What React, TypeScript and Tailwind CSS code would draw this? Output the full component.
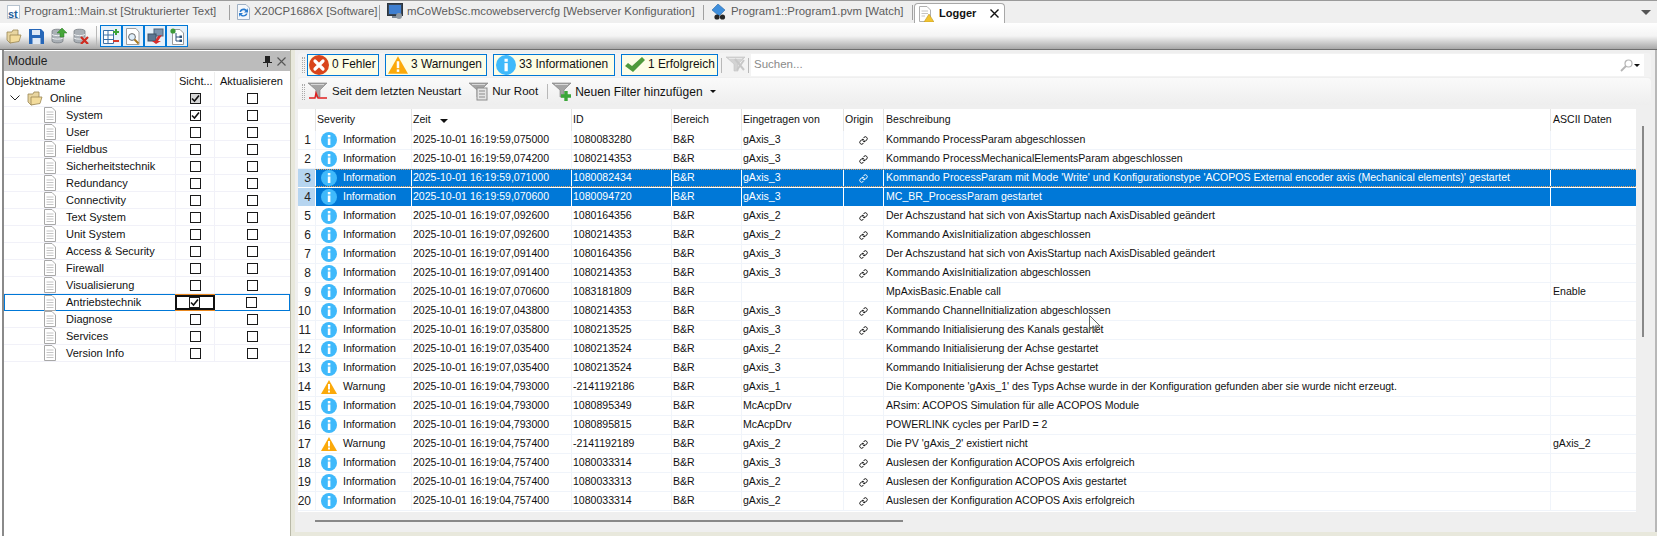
import { Link } from "lucide-react";

type Entry = {
  sev: "i" | "w";
  time: string;
  id: string;
  by: string;
  link: boolean;
  text: string;
  ascii?: string;
};

const ENTRIES: Entry[] = [
  { sev: "i", time: "2025-10-01 16:19:59,075000", id: "1080083280", by: "gAxis_3", link: true, text: "Kommando ProcessParam abgeschlossen" },
  { sev: "i", time: "2025-10-01 16:19:59,074200", id: "1080214353", by: "gAxis_3", link: true, text: "Kommando ProcessMechanicalElementsParam abgeschlossen" },
  { sev: "i", time: "2025-10-01 16:19:59,071000", id: "1080082434", by: "gAxis_3", link: true, text: "Kommando ProcessParam mit Mode 'Write' und Konfigurationstype 'ACOPOS External encoder axis (Mechanical elements)' gestartet" },
  { sev: "i", time: "2025-10-01 16:19:59,070600", id: "1080094720", by: "gAxis_3", link: false, text: "MC_BR_ProcessParam gestartet" },
  { sev: "i", time: "2025-10-01 16:19:07,092600", id: "1080164356", by: "gAxis_2", link: true, text: "Der Achszustand hat sich von AxisStartup nach AxisDisabled geändert" },
  { sev: "i", time: "2025-10-01 16:19:07,092600", id: "1080214353", by: "gAxis_2", link: true, text: "Kommando AxisInitialization abgeschlossen" },
  { sev: "i", time: "2025-10-01 16:19:07,091400", id: "1080164356", by: "gAxis_3", link: true, text: "Der Achszustand hat sich von AxisStartup nach AxisDisabled geändert" },
  { sev: "i", time: "2025-10-01 16:19:07,091400", id: "1080214353", by: "gAxis_3", link: true, text: "Kommando AxisInitialization abgeschlossen" },
  { sev: "i", time: "2025-10-01 16:19:07,070600", id: "1083181809", by: "", link: false, text: "MpAxisBasic.Enable call", ascii: "Enable" },
  { sev: "i", time: "2025-10-01 16:19:07,043800", id: "1080214353", by: "gAxis_3", link: true, text: "Kommando ChannelInitialization abgeschlossen" },
  { sev: "i", time: "2025-10-01 16:19:07,035800", id: "1080213525", by: "gAxis_3", link: true, text: "Kommando Initialisierung des Kanals gestartet" },
  { sev: "i", time: "2025-10-01 16:19:07,035400", id: "1080213524", by: "gAxis_2", link: false, text: "Kommando Initialisierung der Achse gestartet" },
  { sev: "i", time: "2025-10-01 16:19:07,035400", id: "1080213524", by: "gAxis_3", link: false, text: "Kommando Initialisierung der Achse gestartet" },
  { sev: "w", time: "2025-10-01 16:19:04,793000", id: "-2141192186", by: "gAxis_1", link: false, text: "Die Komponente 'gAxis_1' des Typs Achse wurde in der Konfiguration gefunden aber sie wurde nicht erzeugt." },
  { sev: "i", time: "2025-10-01 16:19:04,793000", id: "1080895349", by: "McAcpDrv", link: false, text: "ARsim: ACOPOS Simulation für alle ACOPOS Module" },
  { sev: "i", time: "2025-10-01 16:19:04,793000", id: "1080895815", by: "McAcpDrv", link: false, text: "POWERLINK cycles per ParID = 2" },
  { sev: "w", time: "2025-10-01 16:19:04,757400", id: "-2141192189", by: "gAxis_2", link: true, text: "Die PV 'gAxis_2' existiert nicht", ascii: "gAxis_2" },
  { sev: "i", time: "2025-10-01 16:19:04,757400", id: "1080033314", by: "gAxis_3", link: true, text: "Auslesen der Konfiguration ACOPOS Axis erfolgreich" },
  { sev: "i", time: "2025-10-01 16:19:04,757400", id: "1080033313", by: "gAxis_2", link: true, text: "Auslesen der Konfiguration ACOPOS Axis gestartet" },
  { sev: "i", time: "2025-10-01 16:19:04,757400", id: "1080033314", by: "gAxis_2", link: true, text: "Auslesen der Konfiguration ACOPOS Axis erfolgreich" },
];

const MODULES = [
  { name: "System", on: true },
  { name: "User" },
  { name: "Fieldbus" },
  { name: "Sicherheitstechnik" },
  { name: "Redundancy" },
  { name: "Connectivity" },
  { name: "Text System" },
  { name: "Unit System" },
  { name: "Access & Security" },
  { name: "Firewall" },
  { name: "Visualisierung" },
  { name: "Antriebstechnik", on: true, selected: true },
  { name: "Diagnose" },
  { name: "Services" },
  { name: "Version Info" },
];

function InfoIcon({ size = 16 }: { size?: number }) {
  return (
    <svg width={size} height={size} viewBox="0 0 16 16" className="shrink-0">
      <circle cx="8" cy="8" r="8" fill="#3fb9fb" />
      <rect x="6.8" y="3" width="2.6" height="2.4" fill="#fff" />
      <rect x="6.8" y="6.5" width="2.6" height="6.5" fill="#fff" />
    </svg>
  );
}

function WarnIcon({ size = 16 }: { size?: number }) {
  return (
    <svg width={size} height={size} viewBox="0 0 16 16" className="shrink-0">
      <path d="M8 1 L16 15 H0 Z" fill="#fba90a" />
      <rect x="7" y="5" width="2" height="5.5" fill="#fff" />
      <rect x="7" y="11.5" width="2" height="2" fill="#fff" />
    </svg>
  );
}

function ErrorIcon() {
  return (
    <svg width="20" height="20" viewBox="0 0 20 20" className="shrink-0">
      <circle cx="10" cy="10" r="10" fill="#d9451c" />
      <path d="M6 6 L14 14 M14 6 L6 14" stroke="#fff" strokeWidth="3.2" strokeLinecap="round" />
    </svg>
  );
}

function CheckIcon() {
  return (
    <svg width="20" height="16" viewBox="0 0 20 16" className="shrink-0">
      <path d="M0 9 L3 6 L7 9 L17 0 L20 3 L8 15 Z" fill="#4f9a3c" />
    </svg>
  );
}

function DocIcon() {
  return (
    <svg width="12" height="16" viewBox="0 0 12 16" className="shrink-0">
      <path d="M.5.5 H8 L11.5 4 V15.5 H.5 Z" fill="#fff" stroke="#a8a8a8" />
      <path d="M2.5 5 H9.5 M2.5 7.5 H9.5 M2.5 10 H9.5 M2.5 12.5 H9.5" stroke="#c4c4c4" />
    </svg>
  );
}

function FolderIcon() {
  return (
    <svg width="16" height="16" viewBox="0 0 16 16" className="shrink-0">
      <path d="M1 4 H6 L7 2 H12 V12 L4 15 L1 12 Z" fill="#e8d5a0" stroke="#9a8654" strokeWidth=".8" />
      <path d="M4 7 H15 L13 13.5 L4 15 Z" fill="#f3dc9c" stroke="#9a8654" strokeWidth=".8" />
    </svg>
  );
}

function DbIcon({ children }: { children?: React.ReactNode }) {
  return (
    <svg width="16" height="16" viewBox="0 0 16 16" className="shrink-0">
      <path d="M1 3 C1 .6 12 .6 12 3 V13 C12 15.5 1 15.5 1 13 Z" fill="#aab0b6" stroke="#6d7278" strokeWidth=".7" />
      <path d="M1 6.5 C3 8 10 8 12 6.5 M1 10 C3 11.5 10 11.5 12 10" stroke="#eef0f2" fill="none" />
      {children}
    </svg>
  );
}

function TabIcon({ kind }: { kind: string }) {
  if (kind === "st") {
    return (
      <span className="relative h-[14px] w-[13px] shrink-0 border border-[#b7c3cf] bg-white">
        <span className="absolute -bottom-[2px] left-0 font-['Liberation_Sans',sans-serif] text-[11px] leading-[12px] font-bold text-[#1d5e9a]">st</span>
      </span>
    );
  }
  if (kind === "sw") {
    return (
      <svg width="13" height="16" viewBox="0 0 13 16" className="shrink-0">
        <path d="M.5.5 H9 L12.5 4 V15.5 H.5 Z" fill="#f4f7fb" stroke="#9fb0c4" />
        <path d="M2.5 8 C3 4 8 3.5 10 6 L11 4 V8.5 H7 L8.5 7 C7 5.5 5 6 4 8 Z M10.5 9.5 C10 13 5 13.5 3 11 L2 13 V9 H6 L4.5 10.5 C6 11.5 8 11.5 9 9.5 Z" fill="#2a7cd0" />
      </svg>
    );
  }
  if (kind === "web") {
    return (
      <svg width="16" height="17" viewBox="0 0 16 17" className="shrink-0">
        <rect x=".5" y=".5" width="15" height="12" fill="#3a4756" stroke="#2d3640" />
        <rect x="2" y="2" width="12" height="9" fill="#3f7fd0" />
        <rect x="5" y="13" width="6" height="2" fill="#7b8794" />
        <circle cx="12" cy="13" r="3" fill="#8f99a3" />
      </svg>
    );
  }
  if (kind === "watch") {
    return (
      <svg width="16" height="16" viewBox="0 0 16 16" className="shrink-0">
        <path d="M1 6 L7 0 L14 6 L8 12 Z" fill="#3f8fdc" stroke="#2a6aa8" strokeWidth=".6" />
        <circle cx="6" cy="13" r="2.6" fill="#262626" />
        <circle cx="11.5" cy="13" r="2.6" fill="#262626" />
      </svg>
    );
  }
  return (
    <svg width="15" height="16" viewBox="0 0 15 16" className="shrink-0">
      <path d="M.5.5 H8 L11.5 4 V15.5 H.5 Z" fill="#fff" stroke="#b0b0b0" />
      <path d="M2.5 5 H9 M2.5 7.5 H9 M2.5 10 H6" stroke="#c4c4c4" />
      <path d="M10 8 L15 16 H5 Z" fill="#f2c430" stroke="#b08c20" strokeWidth=".5" />
    </svg>
  );
}

function Tab({ kind, label, width }: { kind: string; label: string; width: string }) {
  return (
    <div className={`flex h-full items-center ${width}`}>
      <div className="flex flex-1 items-center gap-[4px] whitespace-nowrap pl-[7px] text-[#5c5c5c]">
        <TabIcon kind={kind} />
        <span>{label}</span>
      </div>
      <span className="h-[15px] w-px shrink-0 bg-[#a0a0a0]" />
    </div>
  );
}

function ToolButton({ children }: { children: React.ReactNode }) {
  return (
    <div className="flex h-[22px] w-[22px] items-center justify-center border border-[#0078d7] bg-[#e6f1fa]">
      {children}
    </div>
  );
}

function Toolbar() {
  return (
    <div className="flex h-[27px] items-center border-b border-[#6e6e6e] bg-gradient-to-b from-white via-[#f4f4f4] to-[#a8a8a8] pl-[6px]">
      <FolderIcon />
      <div className="ml-[7px] text-[#1c5fb0]">
        <svg width="15" height="15" viewBox="0 0 15 15" className="block">
          <path d="M0 0 H12 L15 3 V15 H0 Z" fill="#2767b8" />
          <rect x="3" y="1" width="8" height="5" fill="#dfe9f5" />
          <rect x="3.5" y="9" width="8" height="6" fill="#dfe9f5" />
        </svg>
      </div>
      <div className="ml-[7px]">
        <DbIcon>
          <path d="M11 0 L16 5 H13 V9 H9 V5 H6 Z" fill="#46a63a" stroke="#2f7a28" strokeWidth=".5" />
        </DbIcon>
      </div>
      <div className="ml-[6px]">
        <DbIcon>
          <path d="M8 9 L15 16 M15 9 L8 16" stroke="#cf2b20" strokeWidth="2.2" />
        </DbIcon>
      </div>
      <span className="ml-[7px] h-[20px] w-px bg-[#b8b8b8]" />
      <div className="ml-[3px] flex">
        <ToolButton>
          <svg width="17" height="17" viewBox="0 0 17 17">
            <path d="M.5 2.5 H10.5 V15.5 H.5 Z M.5 7 H10.5 M.5 11.5 H10.5 M5 2.5 V15.5" fill="#fff" stroke="#3a6ea5" />
            <path d="M10 4 H16 M13 1 V7" stroke="#3aa436" strokeWidth="2" />
            <path d="M10 13 H16" stroke="#d8382a" strokeWidth="2" />
          </svg>
        </ToolButton>
        <ToolButton>
          <svg width="16" height="17" viewBox="0 0 16 17">
            <path d="M1.5.5 H11 L14 4 V16.5 H1.5 Z" fill="#fff" stroke="#a0a0a0" />
            <circle cx="7" cy="9" r="3.4" fill="#dfeefa" stroke="#6a6a6a" />
            <path d="M9.5 11.5 L13.5 15.5" stroke="#a8781e" strokeWidth="2" />
          </svg>
        </ToolButton>
        <ToolButton>
          <svg width="17" height="16" viewBox="0 0 17 16">
            <rect x="7" y="1" width="9" height="7" fill="#7d94ad" stroke="#4f647a" />
            <rect x="1" y="6" width="8" height="7" fill="#5c7691" stroke="#3e5266" />
            <path d="M15 7 L11 13 H14 L9 16 L5 13 H8 L11 8 Z" fill="#d92b2b" />
          </svg>
        </ToolButton>
        <ToolButton>
          <svg width="15" height="17" viewBox="0 0 15 17">
            <path d="M2.5 1.5 H10 L13.5 5 V16.5 H2.5 Z" fill="#fff" stroke="#9a9a9a" />
            <circle cx="3" cy="3" r="2.6" fill="#3d9a38" />
            <path d="M6 5 V13 H10 M6 9 H10" stroke="#2b4f78" fill="none" />
            <rect x="9.5" y="7.5" width="2.5" height="2.5" fill="#2b4f78" />
            <rect x="9.5" y="11.5" width="2.5" height="2.5" fill="#2b4f78" />
          </svg>
        </ToolButton>
      </div>
    </div>
  );
}

function Check({ on, dark }: { on?: boolean; dark?: boolean }) {
  return (
    <span className={`flex h-[11px] w-[11px] items-center justify-center border border-[#1a1a1a] ${dark ? "bg-[#d8d8d8]" : "bg-white"}`}>
      {on && (
        <svg width="9" height="9" viewBox="0 0 9 9">
          <path d="M1 4.5 L3.5 7 L8 1.5" fill="none" stroke="#111" strokeWidth="1.6" />
        </svg>
      )}
    </span>
  );
}

function ModuleRow({ name, on, selected }: { name: string; on?: boolean; selected?: boolean }) {
  return (
    <div className={`flex h-[17px] items-center border-b ${selected ? "border border-[#0078d7]" : "border-[#f1f1f8]"}`}>
      <div className={`flex w-[171px] items-center gap-[10px] ${selected ? "pl-[39px]" : "pl-[40px]"}`}>
        <DocIcon />
        <span>{name}</span>
      </div>
      <div className={`flex h-full w-[40px] items-center justify-center ${selected ? "border-2 border-[#111] shadow-[0_-1px_0_#e8871e,0_1px_0_#e8871e]" : "border-x border-[#f1f1f8]"}`}>
        <Check on={on} />
      </div>
      <div className="flex w-[75px] items-center justify-center">
        <Check />
      </div>
    </div>
  );
}

function ModulePanel() {
  return (
    <aside className="ml-[2px] flex w-[288px] flex-col border-l-2 border-[#8a8a8a] bg-white text-[11px] text-[#111]">
      <div className="mt-px flex h-[20px] items-center justify-between bg-[#bcbcbc] pl-[4px] pr-[4px] text-[12px] text-[#222]">
        <span>Module</span>
        <span className="flex items-center gap-[5px]">
          <svg width="9" height="11" viewBox="0 0 9 11">
            <path d="M2 0 H7 V6 H9 V7 H5 V11 H4 V7 H0 V6 H2 Z" fill="#222" />
          </svg>
          <svg width="9" height="9" viewBox="0 0 9 9">
            <path d="M.5.5 L8.5 8.5 M8.5.5 L.5 8.5" stroke="#555" strokeWidth="1.1" />
          </svg>
        </span>
      </div>
      <div className="flex h-[19px] items-center pt-[1px]">
        <div className="w-[171px] pl-[2px]">Objektname</div>
        <div className="flex h-full w-[40px] items-center border-x border-[#eeeeee] pl-[3px]">Sicht...</div>
        <div className="pl-[5px]">Aktualisieren</div>
      </div>
      <div className="flex h-[17px] items-center border-b border-[#f1f1f8]">
        <div className="flex w-[171px] items-center pl-[6px]">
          <svg width="10" height="6" viewBox="0 0 10 6">
            <path d="M.5.5 L5 5 L9.5.5" fill="none" stroke="#222" />
          </svg>
          <span className="ml-[7px]"><FolderIcon /></span>
          <span className="ml-[7px]">Online</span>
        </div>
        <div className="flex h-full w-[40px] items-center justify-center border-x border-[#f1f1f8]">
          <Check on dark />
        </div>
        <div className="flex w-[75px] items-center justify-center">
          <Check />
        </div>
      </div>
      {MODULES.map((m) => (
        <ModuleRow key={m.name} name={m.name} on={m.on} selected={m.selected} />
      ))}
    </aside>
  );
}

function Counter({ icon, label, width }: { icon: React.ReactNode; label: string; width: string }) {
  return (
    <div className={`flex h-[22px] items-center gap-[3px] whitespace-nowrap border border-[#0078d7] bg-[#fdfde6] pl-[1px] text-[11.9px] ${width}`}>
      {icon}
      <span>{label}</span>
    </div>
  );
}

function Grip() {
  return <span className="h-[16px] w-[3px] border-x border-dotted border-[#aaa]" />;
}

function Funnel({ children }: { children?: React.ReactNode }) {
  return (
    <svg width="20" height="19" viewBox="0 0 20 19" className="shrink-0">
      <path d="M0 1 H19 L12 8 V15 H8 V8 Z" fill="#a4a4a4" stroke="#7c7c7c" strokeWidth=".6" />
      <path d="M3 2.5 H16" stroke="#d8d8d8" />
      {children}
    </svg>
  );
}

function FilterBars() {
  return (
    <div className="text-[11.5px] text-[#111]">
      <div className="flex h-[24px] items-center rounded-t-sm bg-[#f3f3f3] pl-[4px]">
        <Grip />
        <div className="ml-[2px] flex items-center gap-[6px]">
          <Counter icon={<ErrorIcon />} label="0 Fehler" width="w-[72px]" />
          <Counter icon={<span className="ml-[1px]"><WarnIcon size={20} /></span>} label="3 Warnungen" width="w-[102px]" />
          <Counter icon={<span className="ml-[1px]"><InfoIcon size={20} /></span>} label="33 Informationen" width="w-[122px]" />
          <Counter icon={<span className="ml-[2px]"><CheckIcon /></span>} label="1 Erfolgreich" width="w-[97px]" />
        </div>
        <span className="ml-[3px] h-[15px] w-px bg-[#b8b8b8]" />
        <span className="ml-[4px] opacity-40">
          <Funnel>
            <path d="M9 3 L18 14 M18 4 L11 14" stroke="#888" strokeWidth="2" />
          </Funnel>
        </span>
        <span className="ml-[2px] h-[15px] w-px bg-[#b8b8b8]" />
        <div className="ml-[2px] flex h-[22px] w-[893px] items-center justify-between bg-white pl-[3px] text-[#8a8a8a]">
          <span>Suchen...</span>
          <span className="flex items-center pr-[4px]">
            <svg width="13" height="13" viewBox="0 0 13 13">
              <circle cx="8.5" cy="4.5" r="3.5" fill="none" stroke="#b5b5b5" strokeWidth="1.2" />
              <path d="M6 7 L1 12" stroke="#b5b5b5" strokeWidth="1.8" />
            </svg>
            <span className="ml-[1px] h-0 w-0 border-x-[3px] border-t-[3px] border-x-transparent border-t-[#111]" />
          </span>
        </div>
      </div>
      <div className="mt-px flex h-[27px] items-center rounded-t bg-gradient-to-b from-[#fafafa] to-[#eeeeee] pl-[4px]">
        <Grip />
        <span className="ml-[3px]">
          <Funnel>
            <path d="M1 16 H7 L8 11 L10 16 H19" fill="none" stroke="#e02020" strokeWidth="1.4" />
          </Funnel>
        </span>
        <span className="ml-[4px]">Seit dem letzten Neustart</span>
        <span className="ml-[8px]">
          <Funnel>
            <rect x="8" y="6" width="10" height="12" fill="#e4e4e4" stroke="#8b8b8b" />
            <path d="M10 9 H16 M10 12 H16 M10 15 H16" stroke="#8b8b8b" />
          </Funnel>
        </span>
        <span className="ml-[3px]">Nur Root</span>
        <span className="ml-[9px] h-[15px] w-px bg-[#b8b8b8]" />
        <span className="ml-[4px]">
          <Funnel>
            <path d="M9 14 H19 M14 9 V19" stroke="#3ca63a" strokeWidth="3.4" />
          </Funnel>
        </span>
        <span className="ml-[3px] text-[12px]">Neuen Filter hinzufügen</span>
        <span className="ml-[7px] h-0 w-0 border-x-[3px] border-t-[3px] border-x-transparent border-t-[#111]" />
      </div>
    </div>
  );
}

function HeaderCell({ width, inset = "pl-[1px]", children }: { width: string; inset?: string; children?: React.ReactNode }) {
  return (
    <div className={`flex h-full items-center border-l border-[#e4e4e4] ${inset} ${width}`}>{children}</div>
  );
}

function LogRow({ entry, index }: { entry: Entry; index: number }) {
  const selected = index === 2 || index === 3;
  const focused = index === 2;
  const line = selected ? "border-l border-white" : "border-l border-[#f0f4fa]";
  const rowColor = selected ? "bg-[#0078d7] text-white" : "text-[#111]";

  return (
    <div className={`flex h-[19px] items-center ${selected ? "border-b border-white" : "border-b border-[#f0f4fa]"}`}>
      <div className={`flex h-full w-[17px] items-center justify-end pr-[4px] text-[12px] text-[#222] ${selected ? "bg-[#b6d5f0]" : ""}`}>
        {index + 1}
      </div>
      <div className={`flex h-full flex-1 items-center ${rowColor} ${focused ? "border-y border-dotted border-[#e8a25a]" : ""}`}>
        <div className={`flex h-full w-[96px] items-center gap-[6px] pl-[5px] ${line}`}>
          {entry.sev === "i" ? <InfoIcon /> : <WarnIcon />}
          <span>{entry.sev === "i" ? "Information" : "Warnung"}</span>
        </div>
        <div className={`flex h-full w-[160px] items-center pl-[1px] ${line}`}>{entry.time}</div>
        <div className={`flex h-full w-[100px] items-center pl-[1px] ${line}`}>{entry.id}</div>
        <div className={`flex h-full w-[70px] items-center pl-[1px] ${line}`}>B&amp;R</div>
        <div className={`flex h-full w-[102px] items-center pl-[1px] ${line}`}>{entry.by}</div>
        <div className={`flex h-full w-[40px] items-center justify-center ${line}`}>
          {entry.link && <Link size={9} strokeWidth={2.6} />}
        </div>
        <div className={`flex h-full w-[667px] items-center whitespace-nowrap pl-[2px] ${line}`}>{entry.text}</div>
        <div className={`flex h-full flex-1 items-center pl-[2px] ${line}`}>{entry.ascii}</div>
      </div>
    </div>
  );
}

function LogTable() {
  return (
    <div className="mt-[4px] h-[403px] w-[1338px] overflow-hidden bg-white text-[10.55px] text-[#111]">
      <div className="flex h-[22px] items-center">
        <div className="w-[17px]" />
        <HeaderCell width="w-[96px]">Severity</HeaderCell>
        <HeaderCell width="w-[160px]">
          Zeit
          <span className="ml-[9px] mt-[2px] h-0 w-0 border-x-[4px] border-t-[4px] border-x-transparent border-t-[#111]" />
        </HeaderCell>
        <HeaderCell width="w-[100px]">ID</HeaderCell>
        <HeaderCell width="w-[70px]">Bereich</HeaderCell>
        <HeaderCell width="w-[102px]">Eingetragen von</HeaderCell>
        <HeaderCell width="w-[40px]">Origin</HeaderCell>
        <HeaderCell width="w-[667px]" inset="pl-[2px]">Beschreibung</HeaderCell>
        <HeaderCell width="flex-1" inset="pl-[2px]">ASCII Daten</HeaderCell>
      </div>
      {ENTRIES.map((entry, i) => (
        <LogRow key={i} entry={entry} index={i} />
      ))}
    </div>
  );
}

function LoggerPanel() {
  return (
    <section className="relative flex-1 border-l border-[#b9b9a8] bg-[#e8e8dc] pb-[4px] pl-[4px]">
      <div className="h-full border-r-2 border-[#b8b8b8] bg-[#efefef] pl-[3px] pr-[4px] pt-[3px]">
        <FilterBars />
        <LogTable />
        <div className="ml-[17px] mt-[8px] h-[2px] w-[588px] bg-[#888]" />
      </div>
      {/* vertical scroll thumb and the captured mouse pointer */}
      <span className="absolute left-[1351px] top-[76px] h-[211px] w-[2px] bg-[#888]" />
      <svg width="12" height="18" viewBox="0 0 12 18" className="absolute left-[798px] top-[265px]">
        <path d="M.5.5 V15 L4 11.5 L6.5 17 L8.5 16 L6 11 H11 Z" fill="none" stroke="#666" />
      </svg>
    </section>
  );
}

export default function App() {
  return (
    <div className="flex h-[536px] w-[1657px] flex-col overflow-hidden bg-white font-['Liberation_Sans',Arial,sans-serif]">
      <div className="flex h-[23px] items-center border-t border-[#9a9a9a] bg-[#efefef] text-[11.4px]">
        <Tab kind="st" label="Program1::Main.st [Strukturierter Text]" width="w-[230px]" />
        <Tab kind="sw" label="X20CP1686X [Software]" width="w-[150px]" />
        <Tab kind="web" label="mCoWebSc.mcowebservercfg [Webserver Konfiguration]" width="w-[324px]" />
        <Tab kind="watch" label="Program1::Program1.pvm [Watch]" width="w-[209px]" />
        <div className="ml-px mt-[2px] flex h-[20px] w-[91px] items-center self-end rounded-t border border-b-0 border-[#a8a8a8] bg-white pl-[4px] text-[11px] font-bold text-[#111]">
          <TabIcon kind="logger" />
          <span className="ml-[5px]">Logger</span>
          <svg width="9" height="9" viewBox="0 0 9 9" className="ml-[14px]">
            <path d="M.5.5 L8.5 8.5 M8.5.5 L.5 8.5" stroke="#111" strokeWidth="1.4" />
          </svg>
        </div>
        <span className="ml-auto mr-[6px] h-0 w-0 border-x-[5px] border-t-[5px] border-x-transparent border-t-[#555]" />
      </div>
      <Toolbar />
      <main className="flex min-h-0 flex-1">
        <ModulePanel />
        <LoggerPanel />
      </main>
    </div>
  );
}
